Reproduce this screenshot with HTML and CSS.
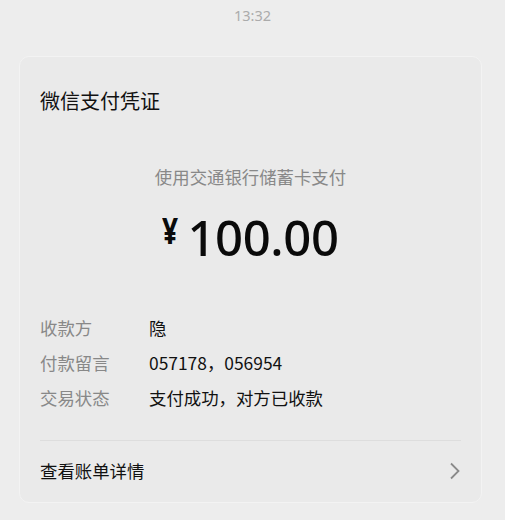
FILE: index.html
```html
<!DOCTYPE html>
<html lang="zh-CN">
<head>
<meta charset="utf-8">
<link rel="stylesheet" href="styles.css">
</head>
<body>
<div class="time">13:32</div>
<div class="card">
  <div class="title">微信支付凭证</div>
  <div class="method">使用交通银行储蓄卡支付</div>
  <div class="amount"><span class="yen">¥</span><span class="num">100.00</span></div>
  <div class="rows">
    <div class="row"><span class="label">收款方</span><span class="value">隐</span></div>
    <div class="row"><span class="label">付款留言</span><span class="value">057178，056954</span></div>
    <div class="row"><span class="label">交易状态</span><span class="value">支付成功，对方已收款</span></div>
  </div>
  <div class="divider"></div>
  <div class="footer">
    <span>查看账单详情</span>
    <svg class="chev" width="12" height="18" viewBox="0 0 12 18"><path d="M2 1.5 L9.5 9 L2 16.5" fill="none" stroke="#8a8a8a" stroke-width="1.8"/></svg>
  </div>
</div>
</body>
</html>
```
FILE: styles.css
```css
html, body {
  margin: 0;
  padding: 0;
  background: #ededed;
  font-family: "Noto Sans CJK SC", "Noto Sans", sans-serif;
}
.time {
  height: 30px;
  line-height: 30px;
  text-align: center;
  font-size: 14.5px;
  color: #ababab;
  font-family: "Noto Sans", "Noto Sans CJK SC", sans-serif;
}
.card {
  margin: 26px 0 0 19px;
  width: 463px;
  box-sizing: border-box;
  background: #eaeaea;
  border: 1px solid #f3f3f3;
  border-radius: 10px;
  padding: 30px 20px 19px 20px;
}
.title {
  font-size: 20px;
  line-height: 28px;
  color: #111;
}
.method {
  margin-top: 50px;
  text-align: center;
  font-size: 17.4px;
  line-height: 24px;
  color: #888;
}
.amount {
  margin-top: 18px;
  height: 60px;
  display: flex;
  justify-content: center;
  align-items: center;
  color: #0a0a0a;
}
.yen {
  display: inline-block;
  font-family: "Noto Sans", sans-serif;
  font-weight: 700;
  font-size: 36px;
  line-height: 40px;
  width: 18px;
  margin-right: 7px;
  margin-top: -12px;
  transform: scaleX(0.78);
  transform-origin: left center;
}
.num {
  font-family: "Noto Sans", sans-serif;
  font-weight: 500;
  font-size: 49px;
  letter-spacing: -0.4px;
  line-height: 60px;
}
.rows {
  margin-top: 43px;
}
.row {
  display: flex;
  height: 35px;
  line-height: 35px;
  font-size: 17.4px;
}
.label {
  width: 109px;
  color: #888;
}
.value {
  color: #111;
}
.divider {
  margin-top: 25px;
  height: 1px;
  background: #dddddd;
}
.footer {
  margin-top: 18px;
  display: flex;
  justify-content: space-between;
  align-items: center;
  font-size: 17.4px;
  line-height: 24px;
  color: #111;
}
.chev {
  margin-right: 0;
}
```
